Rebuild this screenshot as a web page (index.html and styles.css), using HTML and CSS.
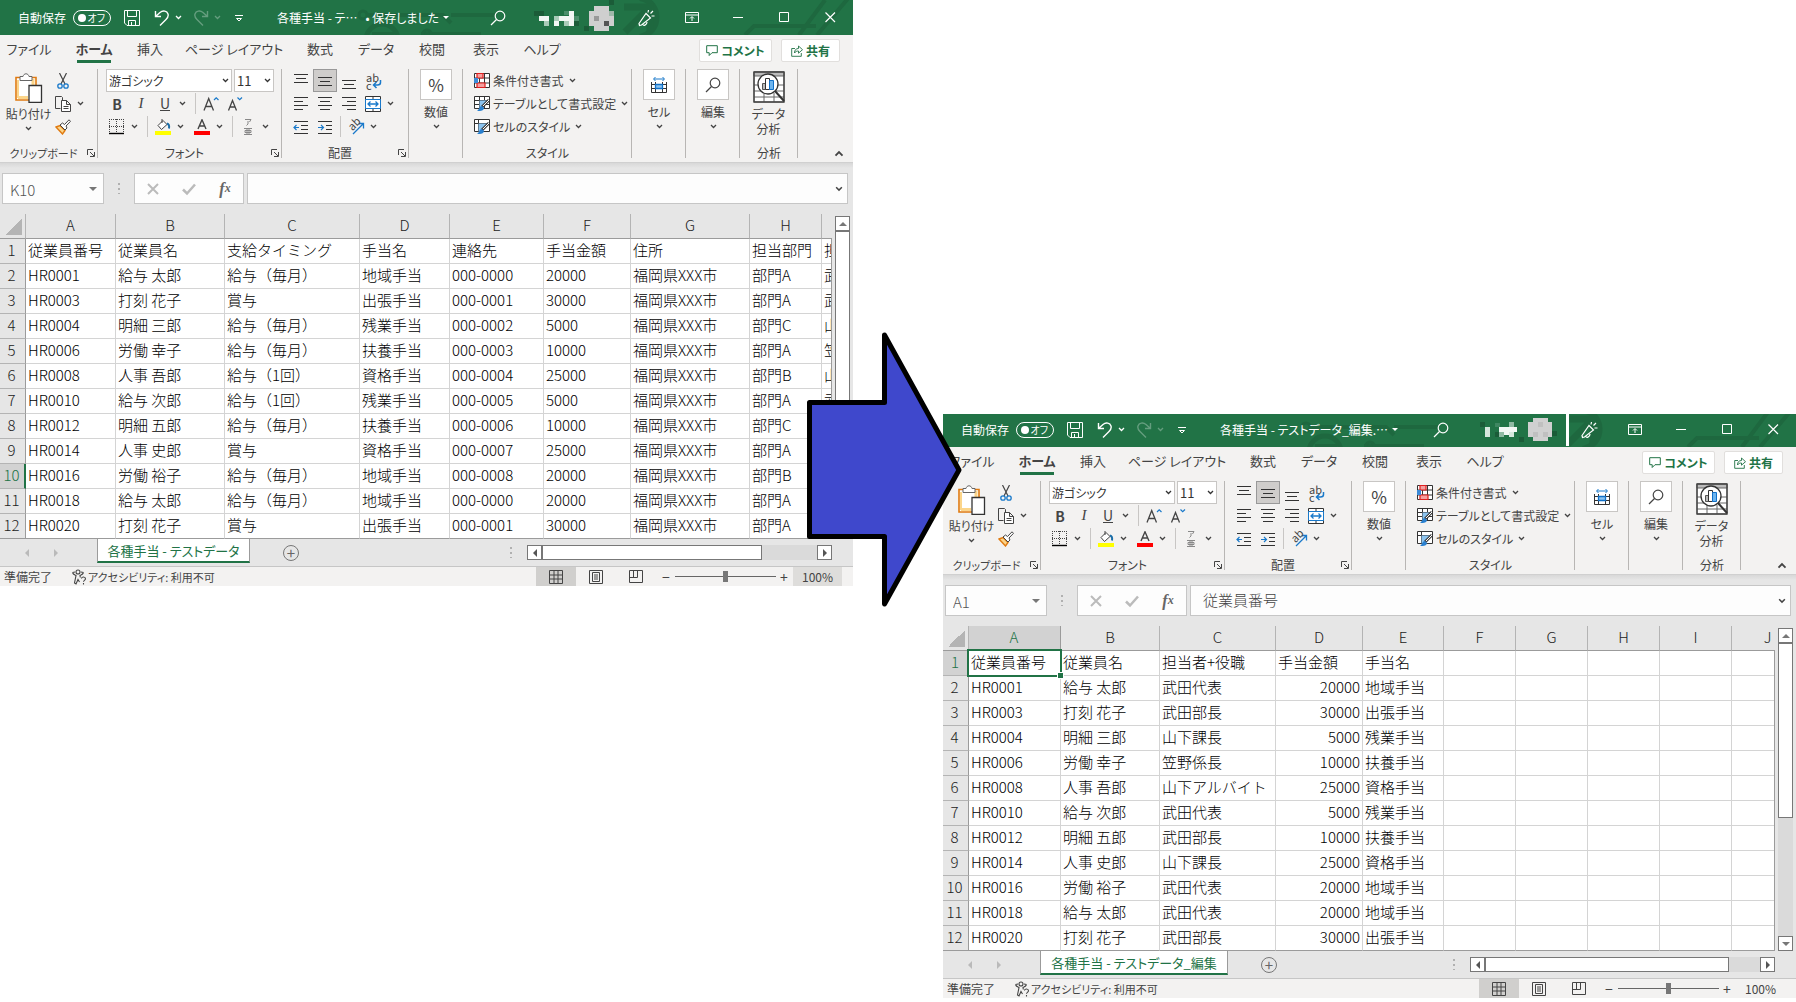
FILE: index.html
```html
<!DOCTYPE html>
<html lang="ja">
<head>
<meta charset="utf-8">
<title>各種手当</title>
<link rel="stylesheet" href="styles.css">
</head>
<body>
<svg class="sprite" aria-hidden="true">
  <symbol id="chev" viewBox="0 0 7 5"><path d="M1 1l2.500 2.500L6 1" fill="none" stroke="currentColor" stroke-width="1.300"/></symbol>
  <symbol id="save" viewBox="0 0 16 16"><path d="M.5.500h15v15H3L.5 13zM3.500.500v6h9v-6M4.500 15.500v-5h7v5M7.500 15v-3" fill="none" stroke="currentColor"/></symbol>
  <symbol id="undo" viewBox="0 0 16 16"><path d="M1.500 1v5.500H7M1.500 6.500L6 2.500c3-2.500 7-1.500 8 1.500.800 2.500-.5 4-2 5.500L6 15.500" fill="none" stroke="currentColor" stroke-width="1.400"/></symbol>
  <symbol id="redo" viewBox="0 0 16 16"><path d="M14.500 1v5.500H9M14.500 6.500L10 2.500c-3-2.500-7-1.500-8 1.500-.8 2.500.5 4 2 5.500l6 6" fill="none" stroke="currentColor" stroke-width="1.400"/></symbol>
  <symbol id="qat" viewBox="0 0 8 8"><path d="M0 1.500h8" stroke="currentColor"/><path d="M1.500 4.500h5L4 7z" fill="none" stroke="currentColor"/></symbol>
  <symbol id="search" viewBox="0 0 16 16"><g fill="none" stroke="currentColor" stroke-width="1.200"><circle cx="10" cy="6" r="4.800"/><path d="M6.500 9.500L1 15"/></g></symbol>
  <symbol id="pen" viewBox="0 0 18 18"><g fill="none" stroke="currentColor" stroke-width="1.200"><path d="M2 14.500L9 4.500l4.500 4.500-9 7-2 .5zM6 15.500c0 1.500 4 1 4-2.500M11 3.500L11.500 1M13.500 4.500L16 2M14.500 7h3"/></g></symbol>
  <symbol id="ribbonopt" viewBox="0 0 14 12"><path d="M.5.500h13v10H.5zM.5 3h13M7 9V5M5 6.500l2-2 2 2" fill="none" stroke="currentColor"/></symbol>
  <symbol id="min" viewBox="0 0 11 11"><path d="M0 5.500h10" stroke="currentColor"/></symbol>
  <symbol id="max" viewBox="0 0 11 11"><path d="M.5.500h9v9h-9z" fill="none" stroke="currentColor"/></symbol>
  <symbol id="close" viewBox="0 0 11 11"><path d="M.5.500l9.500 9.500M10 .5L.5 10" fill="none" stroke="currentColor" stroke-width="1.200"/></symbol>
  <symbol id="circuit" viewBox="0 0 500 35"><g fill="none" stroke="#1e683f" stroke-width="4">
    <circle cx="10" cy="15" r="4" stroke-width="3"/><path d="M14 15h76l8 8M68 34h60"/><circle cx="29" cy="40" r="16" stroke-width="5"/><path d="M19 34h20v6" stroke-width="4"/><circle cx="74" cy="34" r="4" stroke-width="3"/>
    <path d="M98 15h44"/><path d="M287-2c22 4 22 34 0 39" stroke-width="6"/><path d="M271 7h26v24M296 8l-24 24" stroke-width="7"/><path d="M392 35l9-9h62M446 35l26-35M464 35l34-40"/></g></symbol>
  <symbol id="mosaic" viewBox="0 0 78 35"><path d="M-5 11h10v5h-10zM35 21h5v5h-5zM70 0h5v5h-5zM45 26h5v5h-5z" fill="#1b5c38"/><path d="M25 11h5v4h-5zM35 16h5v5h-5z" fill="#4b8f6b"/><path d="M5 21h5v5H5zM25 21h5v5h-5z" fill="#a9cbb8"/><path d="M0 16h10v5H0zM15 21h5v5h-5zM20 16h10v5H20z M30 11h5v15h-5z" fill="#f2f7f4"/><path d="M15 16h5v5h-5z" fill="#a9cbb8"/><path d="M55 6h15v5h5v15h-5v5H55v-5h-5V11h5z" fill="#cfcfcf"/><path d="M55 16h5v5h-5z" fill="#999"/><path d="M70 11h5v5h-5z" fill="#a0b8aa"/><path d="M65 21h5v5h-5z" fill="#555"/></symbol>
  <symbol id="mosaic-2" viewBox="0 0 78 35"><path d="M-2 10h5v5h-5zM13 20h5v5h-5zM70 19h5v5h-5zM37 25h5v5h-5z" fill="#1b5c38"/><path d="M13 11h5v4h-5z" fill="#3f8761"/><path d="M3 15h5v10H3z" fill="#d6e7dd"/><path d="M27 10h5v5h-5zM17 20h5v5h-5z" fill="#8fbaa3"/><path d="M17 15h18v5H17zM22 20h5v3h-5z" fill="#f2f7f4"/><path d="M27 20h5v5h-5z" fill="#d6e7dd"/><path d="M51 6h15v4h4v15h-4v4H51v-4h-5V10h5z" fill="#d0d0d0"/><path d="M56 10h5v5h-5zM51 20h5v5h-5zM61 20h5v5h-5z" fill="#c0c0c0"/><path d="M84 2h3v32h-3z" fill="#fff"/></symbol>
  <symbol id="comment" viewBox="0 0 12 12"><path d="M.7.700h10.600v7H6L3.200 10.500V7.700H.7z" fill="none" stroke="currentColor"/></symbol>
  <symbol id="share" viewBox="0 0 12 12"><path d="M4 3.500H.7v7.800h9.600V8M3.500 8c0-3 1.500-4.500 4-4.500V1l4 3.700-4 3.500V6C5.500 6 4.500 6.500 3.500 8z" fill="none" stroke="currentColor" stroke-width=".9"/></symbol>
  <symbol id="paste" viewBox="0 0 28 30"><path d="M1 4.500h20V27H1z" fill="#fff" stroke="#e07a10" stroke-width="1.600"/><path d="M3 7v18" stroke="#fbd58a" stroke-width="2"/><path d="M3 24.500h10M18 6v6" stroke="#fbd58a" stroke-width="3"/><path d="M5 7.500v-4h3C8.500 1.800 9.500.800 11 .8s2.500 1 3 2.700h3v4z" fill="#fff" stroke="#666"/><path d="M14 12.500h12.500v16.800H14z" fill="#fff" stroke="#333" stroke-width="1.300"/></symbol>
  <symbol id="cut" viewBox="0 0 16 16"><path d="M4.500 0l5.500 11M11.500 0L6 11" fill="none" stroke="#444" stroke-width="1.200"/><g fill="none" stroke="#1979ca" stroke-width="1.300"><circle cx="5" cy="13" r="2.200"/><circle cx="11" cy="13" r="2.200"/></g></symbol>
  <symbol id="copy" viewBox="0 0 16 16"><path d="M5.500 12.500h-5v-12h6l1 1V4" fill="none" stroke="#444"/><path d="M6.500 4.500h5l4 4v7h-9zM11.500 4.500v4h4M8.500 10.500h5M8.500 12.500h5" fill="#fff" stroke="#444"/></symbol>
  <symbol id="brush" viewBox="0 0 16 16"><path d="M1 8l4-1.500 5 5L7.500 15z" fill="#fbd58a" stroke="#e07a10" stroke-width="1.400"/><path d="M5 6l2.500-2 2 1.500L14 .8l1.500 1.500L11 7l1 2-2 2z" fill="#fff" stroke="#444"/></symbol>
  <symbol id="launch" viewBox="0 0 8 8"><path d="M.5 6V.500H6M3 3l4 4M7.500 3v4.500H3" fill="none" stroke="#444"/></symbol>
  <symbol id="grow" viewBox="0 0 16 16"><path d="M1 14.500L5.700 2.500 10.500 14.500M2.700 10.500h6" fill="none" stroke="#444" stroke-width="1.300"/><path d="M11 4l2.200-2.200L15.500 4" fill="none" stroke="#1979ca" stroke-width="1.200"/></symbol>
  <symbol id="shrink" viewBox="0 0 16 16"><path d="M1.500 14.500L5.500 4.500l4 10M3 11h5" fill="none" stroke="#444" stroke-width="1.300"/><path d="M10.500 1.500l2.200 2.200L15 1.500" fill="none" stroke="#1979ca" stroke-width="1.200"/></symbol>
  <symbol id="border" viewBox="0 0 16 16"><path d="M0 .5h15M0 7.500h15M.5 0v14M7.500 0v14M14.500 0v14" fill="none" stroke="#444" stroke-dasharray="1 1"/><path d="M0 14.500h15" stroke="#000" stroke-width="1.400"/></symbol>
  <symbol id="fill" viewBox="0 0 16 16"><path d="M3 6.500L8 1.500l4 4-5.500 5zM7 0v4" fill="#fff" stroke="#444"/><path d="M12 4.500c2 .5 2.500 2 2 5" fill="none" stroke="#1b6ea8" stroke-width="2"/><path d="M0 12h16v4H0z" fill="#ff0"/></symbol>
  <symbol id="fcolor" viewBox="0 0 16 16"><path d="M4 10L8 .8 12 10M5.300 7h5.400" fill="none" stroke="#444" stroke-width="1.400"/><path d="M0 12h16v4H0z" fill="red"/></symbol>
  <symbol id="phon" viewBox="0 0 16 18"><path d="M5 1.500h6L9.500 4M8 3v3L6.500 7.500M4 10.500h8M4 16.500h8M5 12.500h6v2H5zM7 10.500v6M9 10.500v6" fill="none" stroke="#888"/></symbol>
  <symbol id="a-top" viewBox="0 0 16 16"><path d="M1 1.500h14M3 5.500h10M1 9.500h14" stroke="#333"/></symbol>
  <symbol id="a-mid" viewBox="0 0 16 16"><path d="M1 4.500h14M3 8.500h10M1 12.500h14" stroke="#333"/></symbol>
  <symbol id="a-bot" viewBox="0 0 16 16"><path d="M1 7.500h14M3 11.500h10M1 15.500h14" stroke="#333"/></symbol>
  <symbol id="a-left" viewBox="0 0 16 16"><path d="M1 1.500h14M1 5.500h9M1 9.500h14M1 13.500h9" stroke="#333"/></symbol>
  <symbol id="a-center" viewBox="0 0 16 16"><path d="M1 1.500h14M3 5.500h10M1 9.500h14M3 13.500h10" stroke="#333"/></symbol>
  <symbol id="a-right" viewBox="0 0 16 16"><path d="M1 1.500h14M6 5.500h9M1 9.500h14M6 13.500h9" stroke="#333"/></symbol>
  <symbol id="wrap" viewBox="0 0 16 16"><path d="M14.500 7v2.500c0 2-1 2.500-3 2.500H8M10.500 9L7.500 12l3 3" fill="none" stroke="#1979ca" stroke-width="1.500"/></symbol>
  <symbol id="merge" viewBox="0 0 16 16"><path d="M.5.500h15v15H.5zM8 .5v3M8 12.500v3" fill="#fff" stroke="#333"/><path d="M.5 3.500h15v9H.5z" fill="#fff" stroke="#1979ca"/><path d="M3 8h10M5.500 5.500L3 8l2.500 2.500M10.500 5.500L13 8l-2.500 2.500" fill="none" stroke="#1979ca" stroke-width="1.300"/></symbol>
  <symbol id="outdent" viewBox="0 0 16 16"><path d="M1 2.500h14M8 6.500h7M8 10.500h7M1 14.500h14" stroke="#333"/><path d="M6 8.500H1M3.500 6L1 8.500 3.500 11" fill="none" stroke="#1979ca" stroke-width="1.200"/></symbol>
  <symbol id="indent" viewBox="0 0 16 16"><path d="M1 2.500h14M9 6.500h6M9 10.500h6M1 14.500h14" stroke="#333"/><path d="M1 8.500h5M4 6l2.500 2.500L4 11" fill="none" stroke="#1979ca" stroke-width="1.200"/></symbol>
  <symbol id="orient" viewBox="0 0 18 18"><path d="M6 16L16 6M11.500 5.500h5v5" fill="none" stroke="#1979ca" stroke-width="1.300"/></symbol>
  <symbol id="cond" viewBox="0 0 16 16"><path d="M.5.500h15v14H.5zM.5 5h15M.5 10h15M5.500.500v14M10.500.500v14" fill="#fff" stroke="#333"/><path d="M3 .5h6V5H3zM3 10h8v4.500H3z" fill="#f4a0a0" stroke="#e02020" stroke-width="1.200"/><path d="M0 5h4v5H0z" fill="#3c8ad8"/></symbol>
  <symbol id="tblfmt" viewBox="0 0 16 16"><path d="M.5.500h15v12H.5zM.5 4.500h15M.5 8.500h15M5.500.500v12M10.500.500v12" fill="#fff" stroke="#333"/><path d="M5.500 4.500h8l-8 8z" fill="#8cc4f0"/><path d="M15 4L8 11" stroke="#444" stroke-width="3"/><path d="M15 4L9 10" stroke="#fff"/><path d="M8 10c-3 0-2 3-5 4.500 3 1.500 7 0 7-2.500z" fill="#2a80cf"/></symbol>
  <symbol id="cellsty" viewBox="0 0 16 16"><path d="M.5.500h15v12H.5zM.5 4.500h15M4.500.500v12" fill="#fff" stroke="#333"/><path d="M4.500 4.500h10l-9 8h-1z" fill="#8cc4f0"/><path d="M15 4L8 11" stroke="#444" stroke-width="3"/><path d="M15 4L9 10" stroke="#fff"/><path d="M8 10c-3 0-2 3-5 4.500 3 1.500 7 0 7-2.500z" fill="#2a80cf"/></symbol>
  <symbol id="cells" viewBox="0 0 16 16"><path d="M.5 5v10.500h15V5M.5 7.500h15M.5 11.500h15M4.500 5v10.500M11.500 5v10.500" fill="none" stroke="#333"/><path d="M4.500 7.500h7v4h-7z" fill="#8cc4f0" stroke="#1070c8" stroke-width="1.300"/><path d="M3 2h10M4.500 0L2.500 2l2 2M11.500 0l2 2-2 2" fill="none" stroke="#1979ca"/></symbol>
  <symbol id="analysis" viewBox="0 0 32 32"><path d="M1 1h30v30H1zM1 14h30M1 20h30M1 26h30M11 22v9M21 22v9" fill="#fff" stroke="#666"/><path d="M1 1h30v4H1z" fill="#bbb" stroke="#666"/><path d="M1 1h30v30H1z" fill="none" stroke="#444" stroke-width="1.400"/><circle cx="15" cy="13" r="10" fill="#fff" stroke="#333" stroke-width="1.300"/><path d="M9.500 12.500h3v6h-3z" fill="#bbb" stroke="#555"/><path d="M12.500 7.500h4v11h-4z" fill="#fff" stroke="#333"/><path d="M16.500 9.500h4v9h-4z" fill="#6db4ee" stroke="#1070c8"/><path d="M22 20l9 10" stroke="#333" stroke-width="2"/></symbol>
  <symbol id="x" viewBox="0 0 12 12"><path d="M1 1l10 10M11 1L1 11" stroke="#bbb" stroke-width="2"/></symbol>
  <symbol id="check" viewBox="0 0 14 12"><path d="M1 6.500L5 10.500 13 1.500" fill="none" stroke="#bbb" stroke-width="2.500"/></symbol>
  <symbol id="acc" viewBox="0 0 16 16"><g fill="none" stroke="#444" stroke-width="1.100"><circle cx="7" cy="3" r="2"/><path d="M1.500 3.500C2 5.500 4 6 5 6.500L3.500 14l1.500 1 2-4.500L8.500 13M12.500 3.500C12 5.500 10 6 9 6.500l.3 2M1.500 3.500L4 3M12.500 3.500L10 3"/><path d="M10.500 9.500c0-2 4-2 4 .3 0 1.700-2 1.500-2 3M12.500 14v1.500"/></g></symbol>
  <symbol id="v-grid" viewBox="0 0 14 14"><path d="M.5.500h13v13H.5zM.5 5h13M.5 9h13M5 .5v13M9 .5v13" fill="none" stroke="#444"/></symbol>
  <symbol id="v-page" viewBox="0 0 14 14"><path d="M.5.500h13v13H.5zM3.500 2.500h7v9h-7zM5 5h4M5 7h4M5 9h4" fill="none" stroke="#444"/></symbol>
  <symbol id="v-break" viewBox="0 0 14 14"><path d="M.5.500h13v12H.5zM4.500.500v7M.5 7.500h8v-7" fill="none" stroke="#444"/></symbol>
</svg>

<main class="desk">
<section class="win" aria-label="各種手当 - テストデータ">
  <header class="title">
    <svg class="circuit"><use href="#circuit"/></svg>
    <label class="auto">自動保存<input type="checkbox" class="toggle-input"><span class="toggle">オフ</span></label>
    <div class="quick">
      <button class="q-save" aria-label="保存"><svg class="i16"><use href="#save"/></svg></button>
      <button class="q-undo" aria-label="元に戻す"><svg class="i16"><use href="#undo"/></svg><svg class="chev"><use href="#chev"/></svg></button>
      <button class="q-undo faded" aria-label="やり直し"><svg class="i16"><use href="#redo"/></svg><svg class="chev"><use href="#chev"/></svg></button>
      <button aria-label="カスタマイズ"><svg class="i8"><use href="#qat"/></svg></button>
    </div>
    <button class="doc">各種手当 - テ…&nbsp;&nbsp; • 保存しました <span class="tri"></span></button>
    <div class="wctl">
      <button class="w-search" aria-label="検索"><svg class="i16"><use href="#search"/></svg></button>
      <svg class="mosaic"><use href="#mosaic"/></svg>
      <button class="w-pen" aria-label="ペン"><svg class="i18"><use href="#pen"/></svg></button>
      <button aria-label="リボンの表示"><svg class="i14"><use href="#ribbonopt"/></svg></button>
      <button aria-label="最小化"><svg class="i11"><use href="#min"/></svg></button>
      <button aria-label="最大化"><svg class="i11"><use href="#max"/></svg></button>
      <button aria-label="閉じる"><svg class="i11"><use href="#close"/></svg></button>
    </div>
  </header>
  <nav class="tabs">
    <a href="#" class="t-file">ファイル</a><a href="#" class="t-home on">ホーム</a><a href="#" class="t-ins">挿入</a><a href="#" class="t-page">ページ レイアウト</a><a href="#" class="t-fx">数式</a><a href="#" class="t-data">データ</a><a href="#" class="t-rev">校閲</a><a href="#" class="t-view">表示</a><a href="#" class="t-help">ヘルプ</a>
    <div class="tab-actions"><button class="act comment"><svg class="i12"><use href="#comment"/></svg>コメント</button><button class="act share"><svg class="i12"><use href="#share"/></svg>共有</button></div>
  </nav>
  <div class="ribbon">
    <div class="grp g-clip"><div class="body split">
      <button class="big paste"><svg class="i-paste"><use href="#paste"/></svg><span>貼り付け</span><svg class="chev"><use href="#chev"/></svg></button>
      <div class="stack"><div class="row"><button class="ic" aria-label="切り取り"><svg class="i16"><use href="#cut"/></svg></button></div><div class="row"><button class="ic" aria-label="コピー"><svg class="i16"><use href="#copy"/></svg></button><button class="dd" aria-label="コピーの選択肢"><svg class="chev"><use href="#chev"/></svg></button></div><div class="row"><button class="ic" aria-label="書式のコピー"><svg class="i16"><use href="#brush"/></svg></button></div></div>
    </div><div class="foot small"><span>クリップボード</span><button aria-label="クリップボードの設定"><svg class="i8"><use href="#launch"/></svg></button></div></div>
    <div class="grp g-font"><div class="body">
      <div class="row combos"><label class="combo font-name"><select aria-label="フォント"><option>游ゴシック</option></select><svg class="chev"><use href="#chev"/></svg></label><label class="combo font-size"><select aria-label="サイズ"><option>11</option></select><svg class="chev"><use href="#chev"/></svg></label></div>
      <div class="row"><button class="ic b">B</button><button class="ic i">I</button><button class="ic u"><span>U</span></button><button class="dd" aria-label="下線"><svg class="chev"><use href="#chev"/></svg></button><i class="vs"></i><button class="ic" aria-label="拡大"><svg class="i16"><use href="#grow"/></svg></button><button class="ic" aria-label="縮小"><svg class="i16"><use href="#shrink"/></svg></button></div>
      <div class="row"><button class="ic" aria-label="罫線"><svg class="i16"><use href="#border"/></svg></button><button class="dd" aria-label="罫線の種類"><svg class="chev"><use href="#chev"/></svg></button><i class="vs"></i><button class="ic" aria-label="塗りつぶし"><svg class="i16"><use href="#fill"/></svg></button><button class="dd gap" aria-label="塗りつぶしの色"><svg class="chev"><use href="#chev"/></svg></button><button class="ic" aria-label="文字の色"><svg class="i16"><use href="#fcolor"/></svg></button><button class="dd" aria-label="文字色の選択"><svg class="chev"><use href="#chev"/></svg></button><i class="vs"></i><button class="ic" aria-label="ふりがな"><svg class="i18"><use href="#phon"/></svg></button><button class="dd" aria-label="ふりがなの設定"><svg class="chev"><use href="#chev"/></svg></button></div>
    </div><div class="foot"><span>フォント</span><button aria-label="フォントの設定"><svg class="i8"><use href="#launch"/></svg></button></div></div>
    <div class="grp g-align"><div class="body">
      <div class="row"><button class="ic" aria-label="上揃え"><svg class="i16"><use href="#a-top"/></svg></button><button class="ic sel" aria-label="上下中央"><svg class="i16"><use href="#a-mid"/></svg></button><button class="ic" aria-label="下揃え"><svg class="i16"><use href="#a-bot"/></svg></button><button class="ic glyph wrapped" aria-label="折り返し"><svg class="i16"><use href="#wrap"/></svg><span>ab<br>c</span></button></div>
      <div class="row"><button class="ic" aria-label="左揃え"><svg class="i16"><use href="#a-left"/></svg></button><button class="ic" aria-label="中央揃え"><svg class="i16"><use href="#a-center"/></svg></button><button class="ic" aria-label="右揃え"><svg class="i16"><use href="#a-right"/></svg></button><button class="ic" aria-label="結合"><svg class="i16"><use href="#merge"/></svg></button><button class="dd" aria-label="結合の種類"><svg class="chev"><use href="#chev"/></svg></button></div>
      <div class="row"><button class="ic" aria-label="インデント解除"><svg class="i16"><use href="#outdent"/></svg></button><button class="ic" aria-label="インデント"><svg class="i16"><use href="#indent"/></svg></button><i class="vs tight"></i><button class="ic glyph turned" aria-label="方向"><svg class="i18"><use href="#orient"/></svg><span>ab</span></button><button class="dd" aria-label="方向の選択"><svg class="chev"><use href="#chev"/></svg></button></div>
    </div><div class="foot"><span>配置</span><button aria-label="配置の設定"><svg class="i8"><use href="#launch"/></svg></button></div></div>
    <div class="grp g-one"><button class="big"><span class="tile pct">%</span><span>数値</span><svg class="chev"><use href="#chev"/></svg></button></div>
    <div class="grp g-style"><div class="body">
      <div class="row"><button class="line"><svg class="i16"><use href="#cond"/></svg>条件付き書式<svg class="chev"><use href="#chev"/></svg></button></div>
      <div class="row"><button class="line"><svg class="i16"><use href="#tblfmt"/></svg>テーブルとして書式設定<svg class="chev"><use href="#chev"/></svg></button></div>
      <div class="row"><button class="line"><svg class="i16"><use href="#cellsty"/></svg>セルのスタイル<svg class="chev"><use href="#chev"/></svg></button></div>
    </div><div class="foot mid"><span>スタイル</span></div></div>
    <div class="grp g-one"><button class="big"><span class="tile"><svg class="i16"><use href="#cells"/></svg></span><span>セル</span><svg class="chev"><use href="#chev"/></svg></button></div>
    <div class="grp g-one"><button class="big"><span class="tile"><svg class="i16"><use href="#search"/></svg></span><span>編集</span><svg class="chev"><use href="#chev"/></svg></button></div>
    <div class="grp g-data"><button class="big data"><svg class="i32"><use href="#analysis"/></svg><span>データ<br>分析</span></button><div class="foot mid"><span>分析</span></div></div>
    <button class="fold" aria-label="リボンを折りたたむ"><svg class="fold-icon"><use href="#chev"/></svg></button>
  </div>
  <div class="fbar">
    <div class="namebox"><input type="text" value="K10" aria-label="名前ボックス"><span class="tri"></span></div>
    <span class="dots"></span>
    <div class="fxbox"><button aria-label="キャンセル"><svg class="i12"><use href="#x"/></svg></button><button aria-label="入力"><svg class="i14"><use href="#check"/></svg></button><button class="fx">f<sub>x</sub></button></div>
    <div class="formula"><input type="text" value="" aria-label="数式バー"><svg class="chev bold"><use href="#chev"/></svg></div>
  </div>
  <div class="sheet-area">
    <div class="sheet">
      <table>
        <colgroup><col class="c26"><col class="c90"><col class="c109"><col class="c135"><col class="c90"><col class="c94"><col class="c87"><col class="c119"><col class="c72"><col class="c72"></colgroup>
        <thead><tr><td class="corner"></td><th scope="col">A</th><th scope="col">B</th><th scope="col">C</th><th scope="col">D</th><th scope="col">E</th><th scope="col">F</th><th scope="col">G</th><th scope="col">H</th><th scope="col"></th></tr></thead>
        <tbody>
        <tr><th scope="row">1</th><td>従業員番号</td><td>従業員名</td><td>支給タイミング</td><td>手当名</td><td>連絡先</td><td>手当金額</td><td>住所</td><td>担当部門</td><td>担</td></tr>
        <tr><th scope="row">2</th><td>HR0001</td><td>給与 太郎</td><td>給与（毎月）</td><td>地域手当</td><td>000-0000</td><td>20000</td><td>福岡県XXX市</td><td>部門A</td><td>武</td></tr>
        <tr><th scope="row">3</th><td>HR0003</td><td>打刻 花子</td><td>賞与</td><td>出張手当</td><td>000-0001</td><td>30000</td><td>福岡県XXX市</td><td>部門A</td><td>武</td></tr>
        <tr><th scope="row">4</th><td>HR0004</td><td>明細 三郎</td><td>給与（毎月）</td><td>残業手当</td><td>000-0002</td><td>5000</td><td>福岡県XXX市</td><td>部門C</td><td>山</td></tr>
        <tr><th scope="row">5</th><td>HR0006</td><td>労働 幸子</td><td>給与（毎月）</td><td>扶養手当</td><td>000-0003</td><td>10000</td><td>福岡県XXX市</td><td>部門A</td><td>笠</td></tr>
        <tr><th scope="row">6</th><td>HR0008</td><td>人事 吾郎</td><td>給与（1回）</td><td>資格手当</td><td>000-0004</td><td>25000</td><td>福岡県XXX市</td><td>部門B</td><td>山</td></tr>
        <tr><th scope="row">7</th><td>HR0010</td><td>給与 次郎</td><td>給与（1回）</td><td>残業手当</td><td>000-0005</td><td>5000</td><td>福岡県XXX市</td><td>部門A</td><td>武</td></tr>
        <tr><th scope="row">8</th><td>HR0012</td><td>明細 五郎</td><td>給与（毎月）</td><td>扶養手当</td><td>000-0006</td><td>10000</td><td>福岡県XXX市</td><td>部門C</td><td></td></tr>
        <tr><th scope="row">9</th><td>HR0014</td><td>人事 史郎</td><td>賞与</td><td>資格手当</td><td>000-0007</td><td>25000</td><td>福岡県XXX市</td><td>部門A</td><td></td></tr>
        <tr><th scope="row" class="cur">10</th><td>HR0016</td><td>労働 裕子</td><td>給与（毎月）</td><td>地域手当</td><td>000-0008</td><td>20000</td><td>福岡県XXX市</td><td>部門B</td><td></td></tr>
        <tr><th scope="row">11</th><td>HR0018</td><td>給与 太郎</td><td>給与（毎月）</td><td>地域手当</td><td>000-0000</td><td>20000</td><td>福岡県XXX市</td><td>部門A</td><td></td></tr>
        <tr><th scope="row">12</th><td>HR0020</td><td>打刻 花子</td><td>賞与</td><td>出張手当</td><td>000-0001</td><td>30000</td><td>福岡県XXX市</td><td>部門A</td><td></td></tr>
        </tbody>
      </table>
    </div>
    <div class="vscroll"><button class="sb up" aria-label="上へ"></button><span class="vthumb"></span><button class="sb down" aria-label="下へ"></button></div>
  </div>
  <div class="sheetbar">
    <button class="nav prev" aria-label="前のシート"></button><button class="nav next" aria-label="次のシート"></button>
    <a href="#" class="stab">各種手当 - テストデータ</a>
    <button class="add" aria-label="新しいシート">+</button>
    <span class="dots"></span>
    <div class="hscroll"><button class="sb left" aria-label="左へ"></button><span class="hthumb"></span><button class="sb right" aria-label="右へ"></button></div>
  </div>
  <footer class="status">
    <span class="ready">準備完了</span><svg class="i16"><use href="#acc"/></svg><span class="acc-text">アクセシビリティ: 利用不可</span>
    <div class="views"><button class="on" aria-label="標準"><svg class="i14"><use href="#v-grid"/></svg></button><button aria-label="ページレイアウト"><svg class="i14"><use href="#v-page"/></svg></button><button aria-label="改ページ"><svg class="i14"><use href="#v-break"/></svg></button></div>
    <button class="zm">−</button><input type="range" class="zoom" min="0" max="100" value="50" aria-label="ズーム"><button class="zm">+</button><button class="pcent hot">100%</button>
  </footer>
</section>

<section class="win second" aria-label="各種手当 - テストデータ_編集">
  <header class="title">
    <svg class="circuit"><use href="#circuit"/></svg>
    <label class="auto">自動保存<input type="checkbox" class="toggle-input"><span class="toggle">オフ</span></label>
    <div class="quick">
      <button class="q-save" aria-label="保存"><svg class="i16"><use href="#save"/></svg></button>
      <button class="q-undo" aria-label="元に戻す"><svg class="i16"><use href="#undo"/></svg><svg class="chev"><use href="#chev"/></svg></button>
      <button class="q-undo faded" aria-label="やり直し"><svg class="i16"><use href="#redo"/></svg><svg class="chev"><use href="#chev"/></svg></button>
      <button aria-label="カスタマイズ"><svg class="i8"><use href="#qat"/></svg></button>
    </div>
    <button class="doc">各種手当 - テストデータ_編集.… <span class="tri"></span></button>
    <div class="wctl">
      <button class="w-search" aria-label="検索"><svg class="i16"><use href="#search"/></svg></button>
      <svg class="mosaic"><use href="#mosaic-2"/></svg>
      <button class="w-pen" aria-label="ペン"><svg class="i18"><use href="#pen"/></svg></button>
      <button aria-label="リボンの表示"><svg class="i14"><use href="#ribbonopt"/></svg></button>
      <button aria-label="最小化"><svg class="i11"><use href="#min"/></svg></button>
      <button aria-label="最大化"><svg class="i11"><use href="#max"/></svg></button>
      <button aria-label="閉じる"><svg class="i11"><use href="#close"/></svg></button>
    </div>
  </header>
  <nav class="tabs">
    <a href="#" class="t-file">ファイル</a><a href="#" class="t-home on">ホーム</a><a href="#" class="t-ins">挿入</a><a href="#" class="t-page">ページ レイアウト</a><a href="#" class="t-fx">数式</a><a href="#" class="t-data">データ</a><a href="#" class="t-rev">校閲</a><a href="#" class="t-view">表示</a><a href="#" class="t-help">ヘルプ</a>
    <div class="tab-actions"><button class="act comment"><svg class="i12"><use href="#comment"/></svg>コメント</button><button class="act share"><svg class="i12"><use href="#share"/></svg>共有</button></div>
  </nav>
  <div class="ribbon">
    <div class="grp g-clip"><div class="body split">
      <button class="big paste"><svg class="i-paste"><use href="#paste"/></svg><span>貼り付け</span><svg class="chev"><use href="#chev"/></svg></button>
      <div class="stack"><div class="row"><button class="ic" aria-label="切り取り"><svg class="i16"><use href="#cut"/></svg></button></div><div class="row"><button class="ic" aria-label="コピー"><svg class="i16"><use href="#copy"/></svg></button><button class="dd" aria-label="コピーの選択肢"><svg class="chev"><use href="#chev"/></svg></button></div><div class="row"><button class="ic" aria-label="書式のコピー"><svg class="i16"><use href="#brush"/></svg></button></div></div>
    </div><div class="foot small"><span>クリップボード</span><button aria-label="クリップボードの設定"><svg class="i8"><use href="#launch"/></svg></button></div></div>
    <div class="grp g-font"><div class="body">
      <div class="row combos"><label class="combo font-name"><select aria-label="フォント"><option>游ゴシック</option></select><svg class="chev"><use href="#chev"/></svg></label><label class="combo font-size"><select aria-label="サイズ"><option>11</option></select><svg class="chev"><use href="#chev"/></svg></label></div>
      <div class="row"><button class="ic b">B</button><button class="ic i">I</button><button class="ic u"><span>U</span></button><button class="dd" aria-label="下線"><svg class="chev"><use href="#chev"/></svg></button><i class="vs"></i><button class="ic" aria-label="拡大"><svg class="i16"><use href="#grow"/></svg></button><button class="ic" aria-label="縮小"><svg class="i16"><use href="#shrink"/></svg></button></div>
      <div class="row"><button class="ic" aria-label="罫線"><svg class="i16"><use href="#border"/></svg></button><button class="dd" aria-label="罫線の種類"><svg class="chev"><use href="#chev"/></svg></button><i class="vs"></i><button class="ic" aria-label="塗りつぶし"><svg class="i16"><use href="#fill"/></svg></button><button class="dd gap" aria-label="塗りつぶしの色"><svg class="chev"><use href="#chev"/></svg></button><button class="ic" aria-label="文字の色"><svg class="i16"><use href="#fcolor"/></svg></button><button class="dd" aria-label="文字色の選択"><svg class="chev"><use href="#chev"/></svg></button><i class="vs"></i><button class="ic" aria-label="ふりがな"><svg class="i18"><use href="#phon"/></svg></button><button class="dd" aria-label="ふりがなの設定"><svg class="chev"><use href="#chev"/></svg></button></div>
    </div><div class="foot"><span>フォント</span><button aria-label="フォントの設定"><svg class="i8"><use href="#launch"/></svg></button></div></div>
    <div class="grp g-align"><div class="body">
      <div class="row"><button class="ic" aria-label="上揃え"><svg class="i16"><use href="#a-top"/></svg></button><button class="ic sel" aria-label="上下中央"><svg class="i16"><use href="#a-mid"/></svg></button><button class="ic" aria-label="下揃え"><svg class="i16"><use href="#a-bot"/></svg></button><button class="ic glyph wrapped" aria-label="折り返し"><svg class="i16"><use href="#wrap"/></svg><span>ab<br>c</span></button></div>
      <div class="row"><button class="ic" aria-label="左揃え"><svg class="i16"><use href="#a-left"/></svg></button><button class="ic" aria-label="中央揃え"><svg class="i16"><use href="#a-center"/></svg></button><button class="ic" aria-label="右揃え"><svg class="i16"><use href="#a-right"/></svg></button><button class="ic" aria-label="結合"><svg class="i16"><use href="#merge"/></svg></button><button class="dd" aria-label="結合の種類"><svg class="chev"><use href="#chev"/></svg></button></div>
      <div class="row"><button class="ic" aria-label="インデント解除"><svg class="i16"><use href="#outdent"/></svg></button><button class="ic" aria-label="インデント"><svg class="i16"><use href="#indent"/></svg></button><i class="vs tight"></i><button class="ic glyph turned" aria-label="方向"><svg class="i18"><use href="#orient"/></svg><span>ab</span></button><button class="dd" aria-label="方向の選択"><svg class="chev"><use href="#chev"/></svg></button></div>
    </div><div class="foot"><span>配置</span><button aria-label="配置の設定"><svg class="i8"><use href="#launch"/></svg></button></div></div>
    <div class="grp g-one"><button class="big"><span class="tile pct">%</span><span>数値</span><svg class="chev"><use href="#chev"/></svg></button></div>
    <div class="grp g-style"><div class="body">
      <div class="row"><button class="line"><svg class="i16"><use href="#cond"/></svg>条件付き書式<svg class="chev"><use href="#chev"/></svg></button></div>
      <div class="row"><button class="line"><svg class="i16"><use href="#tblfmt"/></svg>テーブルとして書式設定<svg class="chev"><use href="#chev"/></svg></button></div>
      <div class="row"><button class="line"><svg class="i16"><use href="#cellsty"/></svg>セルのスタイル<svg class="chev"><use href="#chev"/></svg></button></div>
    </div><div class="foot mid"><span>スタイル</span></div></div>
    <div class="grp g-one"><button class="big"><span class="tile"><svg class="i16"><use href="#cells"/></svg></span><span>セル</span><svg class="chev"><use href="#chev"/></svg></button></div>
    <div class="grp g-one"><button class="big"><span class="tile"><svg class="i16"><use href="#search"/></svg></span><span>編集</span><svg class="chev"><use href="#chev"/></svg></button></div>
    <div class="grp g-data"><button class="big data"><svg class="i32"><use href="#analysis"/></svg><span>データ<br>分析</span></button><div class="foot mid"><span>分析</span></div></div>
    <button class="fold" aria-label="リボンを折りたたむ"><svg class="fold-icon"><use href="#chev"/></svg></button>
  </div>
  <div class="fbar">
    <div class="namebox"><input type="text" value="A1" aria-label="名前ボックス"><span class="tri"></span></div>
    <span class="dots"></span>
    <div class="fxbox"><button aria-label="キャンセル"><svg class="i12"><use href="#x"/></svg></button><button aria-label="入力"><svg class="i14"><use href="#check"/></svg></button><button class="fx">f<sub>x</sub></button></div>
    <div class="formula"><input type="text" value="従業員番号" aria-label="数式バー"><svg class="chev bold"><use href="#chev"/></svg></div>
  </div>
  <div class="sheet-area">
    <div class="sheet">
      <table>
        <colgroup><col class="c26"><col class="c92"><col class="c99"><col class="c116"><col class="c87"><col class="c81"><col class="c72"><col class="c72"><col class="c72"><col class="c72"><col class="c72"></colgroup>
        <thead><tr><td class="corner"></td><th scope="col" class="cur">A</th><th scope="col">B</th><th scope="col">C</th><th scope="col">D</th><th scope="col">E</th><th scope="col">F</th><th scope="col">G</th><th scope="col">H</th><th scope="col">I</th><th scope="col">J</th></tr></thead>
        <tbody>
        <tr><th scope="row" class="cur plain">1</th><td class="active">従業員番号</td><td>従業員名</td><td>担当者+役職</td><td>手当金額</td><td>手当名</td><td></td><td></td><td></td><td></td><td></td></tr>
        <tr><th scope="row">2</th><td>HR0001</td><td>給与 太郎</td><td>武田代表</td><td class="num">20000</td><td>地域手当</td><td></td><td></td><td></td><td></td><td></td></tr>
        <tr><th scope="row">3</th><td>HR0003</td><td>打刻 花子</td><td>武田部長</td><td class="num">30000</td><td>出張手当</td><td></td><td></td><td></td><td></td><td></td></tr>
        <tr><th scope="row">4</th><td>HR0004</td><td>明細 三郎</td><td>山下課長</td><td class="num">5000</td><td>残業手当</td><td></td><td></td><td></td><td></td><td></td></tr>
        <tr><th scope="row">5</th><td>HR0006</td><td>労働 幸子</td><td>笠野係長</td><td class="num">10000</td><td>扶養手当</td><td></td><td></td><td></td><td></td><td></td></tr>
        <tr><th scope="row">6</th><td>HR0008</td><td>人事 吾郎</td><td>山下アルバイト</td><td class="num">25000</td><td>資格手当</td><td></td><td></td><td></td><td></td><td></td></tr>
        <tr><th scope="row">7</th><td>HR0010</td><td>給与 次郎</td><td>武田代表</td><td class="num">5000</td><td>残業手当</td><td></td><td></td><td></td><td></td><td></td></tr>
        <tr><th scope="row">8</th><td>HR0012</td><td>明細 五郎</td><td>武田部長</td><td class="num">10000</td><td>扶養手当</td><td></td><td></td><td></td><td></td><td></td></tr>
        <tr><th scope="row">9</th><td>HR0014</td><td>人事 史郎</td><td>山下課長</td><td class="num">25000</td><td>資格手当</td><td></td><td></td><td></td><td></td><td></td></tr>
        <tr><th scope="row">10</th><td>HR0016</td><td>労働 裕子</td><td>武田代表</td><td class="num">20000</td><td>地域手当</td><td></td><td></td><td></td><td></td><td></td></tr>
        <tr><th scope="row">11</th><td>HR0018</td><td>給与 太郎</td><td>武田代表</td><td class="num">20000</td><td>地域手当</td><td></td><td></td><td></td><td></td><td></td></tr>
        <tr><th scope="row">12</th><td>HR0020</td><td>打刻 花子</td><td>武田部長</td><td class="num">30000</td><td>出張手当</td><td></td><td></td><td></td><td></td><td></td></tr>
        </tbody>
      </table>
    </div>
    <div class="vscroll"><button class="sb up" aria-label="上へ"></button><span class="vthumb"></span><button class="sb down" aria-label="下へ"></button></div>
  </div>
  <div class="sheetbar">
    <button class="nav prev" aria-label="前のシート"></button><button class="nav next" aria-label="次のシート"></button>
    <a href="#" class="stab wide">各種手当 - テストデータ_編集</a>
    <button class="add" aria-label="新しいシート">+</button>
    <span class="dots"></span>
    <div class="hscroll"><button class="sb left" aria-label="左へ"></button><span class="hthumb"></span><button class="sb right" aria-label="右へ"></button></div>
  </div>
  <footer class="status">
    <span class="ready">準備完了</span><svg class="i16"><use href="#acc"/></svg><span class="acc-text">アクセシビリティ: 利用不可</span>
    <div class="views"><button class="on" aria-label="標準"><svg class="i14"><use href="#v-grid"/></svg></button><button aria-label="ページレイアウト"><svg class="i14"><use href="#v-page"/></svg></button><button aria-label="改ページ"><svg class="i14"><use href="#v-break"/></svg></button></div>
    <button class="zm">−</button><input type="range" class="zoom" min="0" max="100" value="50" aria-label="ズーム"><button class="zm">+</button><button class="pcent">100%</button>
  </footer>
</section>
<svg class="arrow" viewBox="0 0 156 275" aria-hidden="true"><path d="M2.500 70.500h75V3L152 138 77.500 272v-67.500h-75z" fill="#3f48cc" stroke="#000" stroke-width="5" stroke-linejoin="round"/></svg>
</main>
</body>
</html>
```
FILE: styles.css
```css
* { box-sizing: border-box; }
body {
  margin: 0;
  background: #fff;
  color: #444;
  font: 12px/16px "Noto Sans CJK JP", sans-serif;
}
button, select, input { font: inherit; color: inherit; margin: 0; padding: 0; border: 0; background: none; }
button {
  display: flex;
  align-items: center;
  justify-content: center;
  white-space: nowrap;
}
a { color: inherit; text-decoration: none; white-space: nowrap; }
svg { display: block; flex: none; }
.sprite { position: absolute; width: 0; height: 0; }

.desk {
  position: relative;
  display: grid;
  grid-template-columns: 1fr 1fr;
  column-gap: 90px;
  align-items: start;
}
.win { min-width: 0; background: #e6e6e6; }
.second { margin-top: 414px; }
.arrow { position: absolute; left: 807px; top: 332px; width: 156px; height: 275px; }

/* icon sizes */
.i8 { width: 8px; height: 8px; }
.i11 { width: 11px; height: 11px; }
.i12 { width: 12px; height: 12px; }
.i14 { width: 14px; height: 14px; }
.i16 { width: 16px; height: 16px; }
.i18 { width: 18px; height: 18px; }
.i32 { width: 32px; height: 32px; }
.i-paste { width: 28px; height: 30px; }
.chev { width: 7px; height: 5px; }

/* title bar */
.title {
  position: relative;
  display: flex;
  align-items: center;
  height: 35px;
  padding-left: 18px;
  background: #217346;
  color: #fff;
  overflow: hidden;
  font-feature-settings: "palt";
}
.second .title { height: 33px; padding-bottom: 2px; }
.title > * { position: relative; }
.title .circuit { position: absolute; right: 0; bottom: 0; width: 500px; height: 35px; }
.auto { display: flex; align-items: center; gap: 7px; width: 93px; white-space: nowrap; }
.toggle-input { position: absolute; opacity: 0; width: 38px; height: 16px; right: 0; }
.toggle {
  display: flex;
  align-items: center;
  justify-content: space-between;
  width: 38px;
  height: 16px;
  padding: 0 5px 0 4px;
  border: 1px solid #fff;
  border-radius: 8px;
  font-size: 10px;
}
.toggle::before { content: ""; width: 8px; height: 8px; border-radius: 50%; background: #fff; }
.quick { display: flex; margin-left: 13px; width: 153px; }
.q-save { width: 16px; margin-right: 14px; }
.q-undo { width: 39px; gap: 5px; justify-content: flex-start; }
.q-undo:nth-child(3) { width: 42px; }
.faded { opacity: .3; }
.doc { gap: 4px; flex: none; }
.tri { border: 4px solid transparent; border-top-color: currentColor; border-bottom: 0; }
.doc .tri { border-width: 3px 3px 0; }
.wctl { display: flex; align-items: center; margin-left: auto; }
.wctl button { width: 46px; height: 32px; }
.wctl .w-search { margin-right: 18px; }
.wctl .mosaic { width: 78px; height: 35px; overflow: visible; }
.wctl .w-pen { width: 52px; padding-left: 6px; }
symbol { overflow: visible; }

/* ribbon tabs */
.tabs { display: flex; height: 30px; background: #f3f2f1; font-size: 13px; font-feature-settings: "palt"; }
.tabs a { display: flex; justify-content: center; align-items: center; border-bottom: 3px solid transparent; height: 28px; padding-top: 2px; }
.tabs .on { font-weight: 700; border-color: #217346; }
.t-file { width: 40px; margin-left: 9px; }
.t-home { width: 34px; margin-left: 28px; }
.t-ins { width: 26px; margin-left: 26px; }
.t-page { width: 86px; margin-left: 28px; }
.t-fx { width: 28px; margin-left: 29px; }
.t-data { width: 34px; margin-left: 25px; }
.t-rev { width: 26px; margin-left: 26px; }
.t-view { width: 28px; margin-left: 27px; }
.t-help { width: 34px; margin-left: 25px; }
.tab-actions { display: flex; gap: 9px; margin: 4px 13px 0 auto; }
.act { height: 23px; gap: 3px; background: #fff; border: 1px solid #e1dfdd; border-radius: 2px; color: #217346; font-size: 12px; font-weight: 700; }
.comment { width: 73px; }
.share { width: 59px; }

/* ribbon */
.ribbon {
  display: flex;
  height: 98px;
  padding-top: 4px;
  background: #f3f2f1;
  border-bottom: 1px solid #d0d0d0;
  font-feature-settings: "palt";
}
.grp {
  display: flex;
  flex-direction: column;
  flex: none;
  height: 93px;
  background: linear-gradient(#b8b6b4, #b8b6b4) right top / 1px 89px no-repeat;
}
.g-clip { width: 98px; }
.g-font { width: 184px; }
.g-align { width: 127px; }
.g-one { width: 54px; align-items: center; }
.g-style { width: 169px; }
.g-data { width: 58px; }
.body { height: 75px; padding-left: 7px; flex: none; }
.split { display: flex; padding-left: 6px; }
.stack { flex: 1; }
.row { display: flex; align-items: center; height: 23px; }
.foot { display: flex; align-items: center; height: 17px; padding-right: 3px; }
.foot span { flex: 1; text-align: center; white-space: nowrap; }
.foot.mid { padding: 0; }
.small { font-size: 11px; }
.big { flex-direction: column; justify-content: flex-start; height: 75px; }
.big > .chev { margin-top: 4px; }
.paste { width: 45px; padding-top: 4px; }
.paste span { margin-top: 3px; }
.tile { display: flex; align-items: center; justify-content: center; width: 32px; height: 31px; margin-bottom: 4px; background: #fff; border: 1px solid #c8c6c4; }
.pct { font-size: 17px; }
.data { padding-top: 2px; }
.data span { margin-top: 3px; line-height: 15px; }
.g-data .big { width: 57px; }
.ic { width: 24px; height: 23px; flex: none; }
.sel { background: #cfcdcb; border: 1px solid #999; }
.dd { width: 11px; height: 23px; flex: none; }
.gap { margin-right: 4px; }
.vs { width: 1px; height: 21px; margin: 0 3px 0 7px; background: #c8c6c4; flex: none; }
.tight { margin-left: 3px; }
.b { font-size: 14px; font-weight: 700; }
.i { font: italic 15px "Liberation Serif", serif; }
.u { font-size: 14px; }
.u span { border-bottom: 1px solid #444; line-height: 14px; }
.glyph { display: grid; place-content: center; font-size: 11px; line-height: 8px; text-align: left; }
.glyph > * { grid-area: 1 / 1; }
.wrapped { width: 26px; }
.turned span { transform: rotate(-45deg); line-height: 10px; align-self: start; justify-self: start; }
.combos { gap: 2px; padding-left: 1px; }
.combo { display: grid; align-items: center; height: 23px; background: #fff; border: 1px solid #c8c6c4; color: #333; }
.combo > * { grid-area: 1 / 1; }
.combo select { width: 100%; height: 21px; padding-left: 2px; appearance: none; }
.combo .chev { justify-self: end; margin-right: 2px; pointer-events: none; }
.font-name { width: 126px; }
.font-size { width: 40px; font-size: 13px; }
.line { gap: 3px; padding-left: 4px; }
.line .chev { margin-left: 2px; }
.fold { margin: auto 9px 3px auto; width: 10px; height: 12px; }
.fold-icon { width: 10px; height: 7px; transform: rotate(180deg); }

/* formula bar */
.fbar {
  display: flex;
  align-items: center;
  height: 51px;
  padding: 0 5px 0 2px;
  background: linear-gradient(#d8d8d8, #e6e6e6 5px);
}
.namebox, .fxbox, .formula { display: flex; align-items: center; height: 31px; background: #fdfdfd; border: 1px solid #c6c6c6; }
.namebox { width: 102px; padding: 0 6px 0 7px; }
.namebox input { flex: 1; min-width: 0; height: 28px; padding-top: 2px; color: #555; }
.namebox .tri { color: #777; }
.namebox input, .formula input { font-size: 15px; font-weight: 300; }
.dots { width: 2px; height: 11px; margin: 0 14px; background: repeating-linear-gradient(#b0b0b0 0 2px, transparent 2px 5px); }
.fxbox { width: 110px; margin-right: 3px; justify-content: space-around; }
.fxbox button { width: 30px; }
.fxbox .fx { font: italic 700 16px "Liberation Serif", serif; color: #666; }
.fx sub { font-size: 12px; }
.formula { flex: 1; padding: 0 4px 0 12px; }
.formula input { flex: 1; min-width: 0; height: 28px; padding-bottom: 3px; }
.formula .bold { width: 8px; height: 6px; }

/* worksheet */
.sheet-area { display: flex; height: 325px; }
.sheet { position: relative; flex: 1; min-width: 0; overflow: hidden; }
.sheet::after { content: ""; position: absolute; right: 0; top: 24px; bottom: 0; width: 1px; background: #9b9b9b; }
table { border-collapse: separate; border-spacing: 0; table-layout: fixed; width: 0; color: #000; font-size: 15px; font-weight: 300; }
th, td { height: 25px; padding: 0 0 2px; overflow: hidden; white-space: nowrap; line-height: 22px; }
th { font-weight: 300; text-align: center; background: #e6e6e6; color: #222; }
thead th { border-right: 1px solid #b4b4b4; border-bottom: 1px solid #9b9b9b; }
tbody th { border-right: 1px solid #9b9b9b; border-bottom: 1px solid #b4b4b4; padding-right: 2px; }
tbody td { padding-left: 2px; background: #fff; border-right: 1px solid #d4d4d4; border-bottom: 1px solid #d4d4d4; }
tbody tr:last-child > * { border-bottom-color: #9b9b9b; }
tbody .num { text-align: right; padding-right: 2px; }
.corner { border-right: 1px solid #b4b4b4; border-bottom: 1px solid #9b9b9b; background: linear-gradient(135deg, transparent 50%, #b4b4b4 50%) 5px 4px / 17px 17px no-repeat; }
th.cur { background: #d2d2d2; color: #217346; border-right: 2px solid #217346; padding-right: 1px; }
th.plain, thead th.cur { border-right: 1px solid #9b9b9b; }
td.active { position: relative; overflow: visible; }
.active::before { content: ""; position: absolute; inset: -2px; border: 2px solid #217346; }
.active::after { content: ""; position: absolute; right: -3px; bottom: -3px; width: 5px; height: 5px; background: #217346; outline: 1px solid #fff; }
.c26 { width: 26px; }
.c72 { width: 72px; }
.c81 { width: 81px; }
.c87 { width: 87px; }
.c90 { width: 90px; }
.c92 { width: 92px; }
.c94 { width: 94px; }
.c99 { width: 99px; }
.c109 { width: 109px; }
.c116 { width: 116px; }
.c119 { width: 119px; }
.c135 { width: 135px; }

.vscroll { display: flex; flex-direction: column; width: 15px; margin: 2px 3px 0; background: #dadada; }
.sb { width: 15px; height: 15px; background: #fff; border: 1px solid #777; flex: none; }
.sb::before, .nav::before { content: ""; border: 4px solid transparent; }
.up::before { border-bottom-color: #777; border-top: 0; }
.down::before { border-top-color: #777; border-bottom: 0; }
.left::before, .prev::before { border-right-color: #555; border-left: 0; }
.right::before, .next::before { border-left-color: #555; border-right: 0; }
.vthumb { height: 175px; background: #fff; border: 1px solid #777; }
.win:first-child .vthumb { height: 280px; }
.down { margin-top: auto; }

/* sheet tabs */
.sheetbar { display: flex; align-items: center; height: 27px; padding-right: 21px; font-feature-settings: "palt"; }
.nav { width: 29px; height: 20px; opacity: .3; }
.prev { margin-left: 12px; }
.stab {
  display: flex;
  align-items: center;
  justify-content: center;
  align-self: flex-start;
  width: 153px;
  height: 24px;
  margin: 0 33px 0 27px;
  padding-top: 2px;
  background: #fff;
  border: 1px solid #9b9b9b;
  border-width: 0 1px;
  border-bottom: 2px solid #217346;
  color: #217346;
  font-size: 13px;
}
.wide { width: 188px; }
.add { width: 16px; height: 16px; border: 1px solid #777; border-radius: 50%; font-size: 15px; color: #666; line-height: 12px; }
.sheetbar .dots { margin: 0 15px 0 auto; }
.hscroll { display: flex; width: 305px; background: #dadada; }
.hthumb { width: 220px; background: #fff; border: 1px solid #777; }
.second .hthumb { width: 244px; }
.right { margin-left: auto; }

/* status bar */
.status { display: flex; align-items: center; height: 20px; padding: 0 11px 0 4px; background: #f3f2f1; border-top: 1px solid #c6c6c6; font-feature-settings: "palt"; white-space: nowrap; }
.ready { width: 67px; }
.acc-text { font-size: 11px; padding-left: 1px; }
.views { display: flex; margin-left: auto; margin-right: 2px; }
.views button { width: 40px; height: 19px; }
.views .on { background: #d0cfcd; }
.zm { width: 16px; height: 18px; font-size: 14px; }
.zoom { width: 101px; height: 18px; appearance: none; margin: 0 0 0 1px; background: linear-gradient(#666, #666) center / 100% 1px no-repeat; }
.zoom::-webkit-slider-thumb { appearance: none; width: 5px; height: 11px; background: #777; }
.pcent { width: 49px; height: 19px; margin-left: 1px; }
.hot { background: #dedddb; }
```
